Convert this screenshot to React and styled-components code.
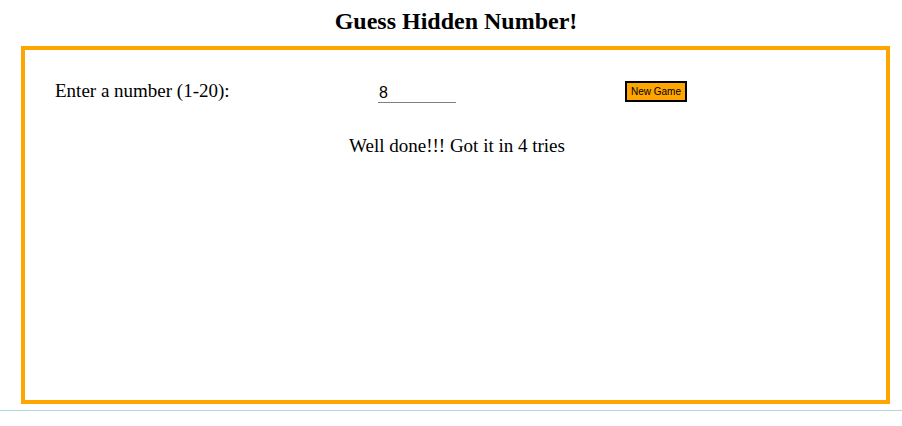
import React from 'react'
import styled, { createGlobalStyle } from 'styled-components'

const GlobalStyle = createGlobalStyle`
  html, body {
    margin: 0;
    padding: 0;
    background: #fff;
  }
  body {
    font-family: "Liberation Serif", "Times New Roman", serif;
    color: #000;
  }
`

const Page = styled.div`
  width: 902px;
  border-bottom: 1px solid #add8e6;
  padding-bottom: 6px;
`

const Title = styled.h1`
  margin: 0;
  padding-top: 6px;
  height: 40px;
  text-align: center;
  font-size: 24px;
  font-weight: bold;
  line-height: 30px;
  padding-left: 10px;
`

const Board = styled.div`
  margin: 0 12px 0 21px;
  height: 329px;
  border: 4px solid #ffa500;
  padding: 21px 0 0 30px;
  width: 831px;
`

const Row = styled.div`
  display: flex;
  align-items: center;
  height: 40px;
`

const Label = styled.label`
  width: 323px;
  font-size: 19px;
`

const NumberInput = styled.input`
  width: 76px;
  border: none;
  border-bottom: 1px solid #808080;
  outline: none;
  padding: 0 1px;
  font-family: "Liberation Sans", Arial, sans-serif;
  font-size: 16px;
  line-height: 18px;
  margin-top: 4px;
`

const Spacer = styled.div`
  width: 169px;
`

const Button = styled.button`
  background: #ffa500;
  border: 2px solid #000;
  font-family: "Liberation Sans", Arial, sans-serif;
  font-size: 10px;
  height: 21px;
  padding: 0 4px;
  color: #000;
  margin-top: 1px;
`

const Message = styled.p`
  margin: 24px 0 0 -27px;
  text-align: center;
  font-size: 19px;
`

export default function App() {
  return (
    <Page>
      <GlobalStyle />
      <Title>Guess Hidden Number!</Title>
      <Board>
        <Row>
          <Label>Enter a number (1-20):</Label>
          <NumberInput type="text" defaultValue="8" />
          <Spacer />
          <Button>New Game</Button>
        </Row>
        <Message>Well done!!! Got it in 4 tries</Message>
      </Board>
    </Page>
  )
}
